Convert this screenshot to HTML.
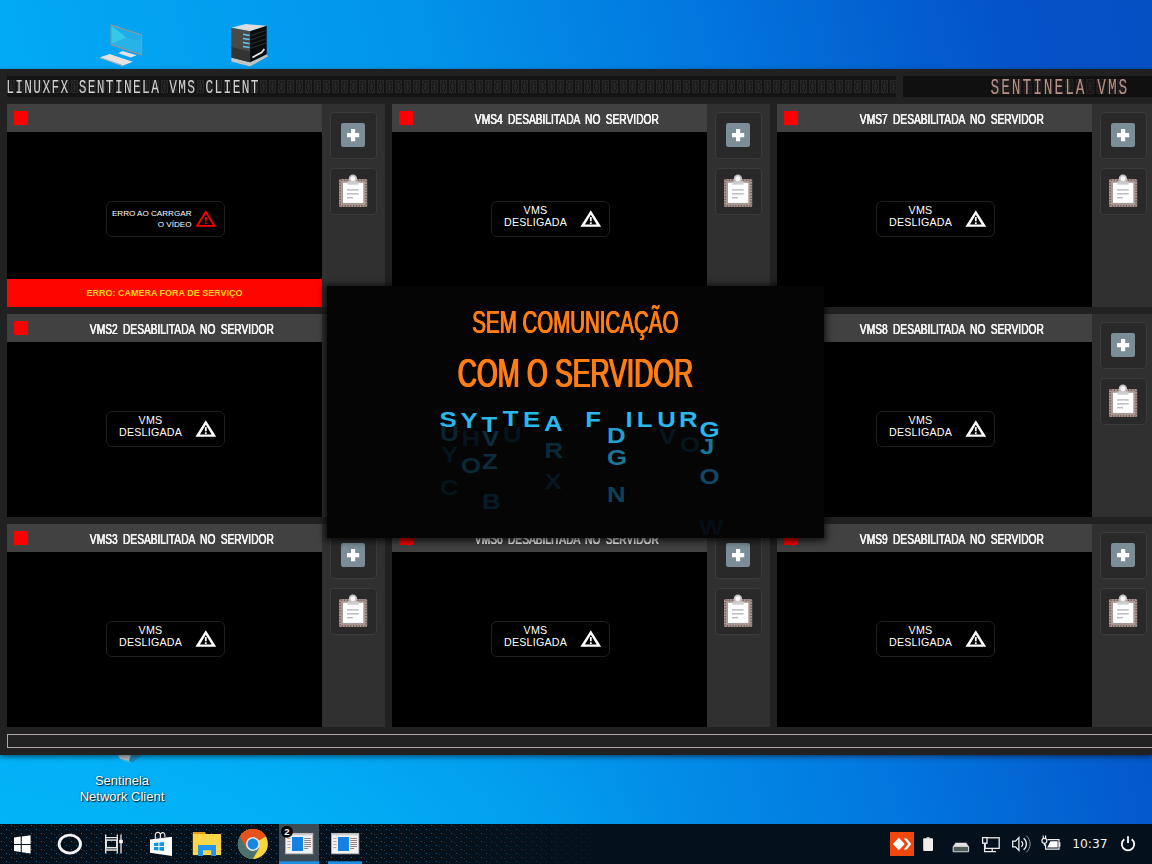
<!DOCTYPE html>
<html lang="pt-BR"><head><meta charset="utf-8"><title>Linuxfx Sentinela VMS Client</title>
<style>
*{box-sizing:border-box;margin:0;padding:0}
html,body{width:1152px;height:864px;overflow:hidden}
body{position:relative;font-family:"Liberation Sans",sans-serif;background:#0487e2;color:#fff}
.a{position:absolute}
#desk{left:0;top:0;width:1152px;height:864px;background:radial-gradient(ellipse 520px 170px at 140px 850px,rgba(2,182,249,.85),rgba(2,182,249,0)),linear-gradient(76deg,#02b0f7 0%,#02a9f5 16%,#0296eb 44%,#0276de 67%,#0364d2 78%,#0453c8 89%,#0550c3 100%)}
#win{left:0;top:69px;width:1152px;height:686px;background:#212121;box-shadow:0 2px 5px rgba(0,0,0,.5)}
#wc{left:0;top:0;width:1152px;height:686px;overflow:hidden}
.led{font-family:"Liberation Mono",monospace;white-space:pre;transform-origin:0 0}
.cam{width:378px;height:203px;background:#303030}
.hd{left:0;top:0;width:315px;height:28px;background:#414141}
.vid{left:0;top:28px;width:315px;height:175px;background:#000}
.sq{left:7px;top:7px;width:14px;height:14px;background:#fe0000}
.ttl{left:35px;top:1px;width:280px;height:28px;text-align:center;font-size:14.5px;line-height:28px;white-space:nowrap;color:#f2f2f2}
.ttl span{display:inline-block;transform:scaleX(.703);word-spacing:3.6px;text-shadow:.35px 0 0 #f2f2f2,-.35px 0 0 #f2f2f2;transform-origin:50% 50%}
.btn{left:323px;width:47px;height:47px;border:1px solid #3b3b3b;border-radius:4px;background:#292929}
.lab{left:99px;top:97px;width:119px;height:36px;border:1px solid #1f1f1f;border-radius:6px;background:#000}
.lab .t{left:0;top:2px;width:87px;text-align:center;font-size:10.7px;letter-spacing:.2px;line-height:12px;color:#fff;white-space:nowrap}
</style></head><body>
<div id="desk" class="a"></div>
<svg class="a" style="left:96px;top:20px" width="52" height="50" viewBox="0 0 52 50">
<polygon points="22.2,33.3 26.5,31 40.7,35.2 34.9,37.5" fill="#e6e2e0"/>
<polygon points="15.1,5.1 45.6,14.8 45.6,34.9 15.1,24.5" fill="#22abe8" stroke="#9c948f" stroke-width="1.1"/>
<polygon points="15.7,6 15.7,24 30.5,17.6" fill="#33c9e8"/>
<polygon points="15.7,24 30.5,17.6 45,21 45,34 " fill="#2bb8ea" opacity=".6"/>
<polygon points="4.1,37.2 13.5,33.9 36.8,41.7 27.1,45.6" fill="#e6e2e0"/>
<polygon points="4.1,37.2 27.1,45.6 27.1,46.6 4.1,38.2" fill="#b9b0ab"/>
</svg>
<svg class="a" style="left:228px;top:21px" width="44" height="48" viewBox="0 0 44 48">
<polygon points="3.3,36.5 22.1,41.3 38.7,33.2 40,35.2 22,45.5 3.3,40.4" fill="#c4c4c4"/>
<polygon points="3.3,6.7 17.9,3.1 38.7,4.7 22.1,10.2" fill="#dcdcdc"/>
<polygon points="3.3,6.7 22.1,10.2 22.1,41.3 3.3,36.5" fill="#484a4a"/>
<polygon points="3.3,26 22.1,30.5 22.1,41.3 3.3,36.5" fill="#333"/>
<polygon points="22.1,10.2 38.7,4.7 38.7,33.2 22.1,41.3" fill="#0b0b0b"/>
<g stroke="#62c6f2" stroke-width="1.5"><line x1="15" y1="13.2" x2="21.6" y2="14.4"/><line x1="15" y1="17.4" x2="21.6" y2="18.6"/><line x1="15" y1="21.6" x2="21.6" y2="22.8"/><line x1="15" y1="25.4" x2="21.6" y2="26.6"/></g>
<g stroke="#2c2c2c" stroke-width="1.1"><line x1="23" y1="14.6" x2="38" y2="9.4"/><line x1="23" y1="18.8" x2="38" y2="13.6"/><line x1="23" y1="23" x2="38" y2="17.8"/><line x1="23" y1="27.2" x2="38" y2="22"/></g>
<path d="M24.4 36.4 L33.5 31.6 L36.4 28" fill="none" stroke="#eaeaea" stroke-width="1.7"/>
</svg>
<svg class="a" style="left:112px;top:755px" width="36" height="10" viewBox="0 0 36 10">
<polygon points="6,0 19,0 17,6 8,4" fill="#b9c4c9"/><polygon points="19,0 30,0 20,8 17,6" fill="#1f88b8"/><polygon points="8,4 17,6 20,8 12,6" fill="#3cc3e6"/>
</svg>
<div class="a" style="left:62px;top:773px;width:120px;text-align:center;font-size:13px;line-height:15.6px;color:#fff;text-shadow:1px 1px 1px rgba(0,0,0,.85),0 0 2px rgba(0,0,0,.5)">Sentinela<br>Network Client</div>
<div id="win" class="a"><div id="wc" class="a">
<svg class="a" style="left:7px;top:7px" width="889" height="21" viewBox="0 0 889 21">
<defs><pattern id="seg" width="9" height="21" patternUnits="userSpaceOnUse">
<g stroke="#272727" stroke-width="1" fill="none"><path d="M1.5 4.5h6M1.5 10.5h6M1.5 16.5h6M1.5 4.5v12M7.5 4.5v12M4.5 4.5v12M1.5 4.5l6 12M7.5 4.5l-6 12"/></g></pattern></defs>
<rect width="889" height="21" fill="#141414"/><rect x="0" width="889" height="21" fill="url(#seg)"/></svg>
<div class="a led" id="led1" style="left:6.2px;top:10px;font-size:12.8px;letter-spacing:1.38px;line-height:12px;height:12px;color:#d2d2d2;transform:scale(1,1.58)">LINUXFX SENTINELA VMS CLIENT</div>
<svg class="a" style="left:903px;top:7px" width="249" height="21" viewBox="0 0 249 21"><defs><pattern id="seg2" x="88.5" width="10.4" height="21" patternUnits="userSpaceOnUse"><g stroke="#262222" stroke-width="1" fill="none"><path d="M1.5 3.5h7M1.5 10.5h7M1.5 17.5h7M1.5 3.5v14M8.5 3.5v14M5 3.5v14M1.5 3.5l7 14M8.5 3.5l-7 14"/></g></pattern></defs><rect width="249" height="21" fill="#101010"/><rect x="88.5" width="135.2" height="21" fill="url(#seg2)"/></svg>
<div class="a led" id="led2" style="left:990.5px;top:8px;font-size:14.5px;letter-spacing:1.97px;line-height:14px;height:14px;color:#b89088;transform:scale(1,1.567)">SENTINELA VMS</div>
<div class="a cam" style="left:7px;top:35px"><div class="a hd"></div><div class="a vid"></div><div class="a sq"></div><div class="a lab"><div class="a t" style="left:0px;top:6px;width:84.5px;text-align:right;font-size:8.1px;letter-spacing:0;line-height:11px">ERRO AO CARRGAR<br>O VÍDEO</div><svg class="a" style="left:88px;top:8px" width="23" height="19" viewBox="0 0 23 19"><path d="M10.8 0.2L21.2 16.8H0.4z M10.8 3.7L3.7 15H17.9z" fill="#f00" fill-rule="evenodd"/><rect x="9.9" y="7" width="1.8" height="4.3" fill="#f00"/><rect x="9.9" y="12.3" width="1.8" height="1.7" fill="#f00"/></svg></div><div class="a" style="left:0;top:175px;width:315px;height:28px;background:#fe0500;text-align:center;font-size:9px;font-weight:bold;line-height:29px;color:#ffd21c">ERRO: CAMERA FORA DE SERVIÇO</div><div class="a btn" style="top:8px"><svg class="a" style="left:10px;top:10px" width="25" height="25" viewBox="0 0 25 25"><rect x="0" y="0" width="24" height="24" rx="2.2" fill="#7b8d96"/><path d="M10 6h4.2v4h4v4.2h-4v4h-4.2v-4h-4v-4.2h4z" fill="#fff"/></svg></div><div class="a btn" style="top:64px"><svg class="a" style="left:7px;top:5px" width="31" height="35" viewBox="0 0 31 35"><rect x="1" y="5" width="28.2" height="28.1" rx="1.6" fill="#a69895"/><rect x="2.1" y="6.1" width="26" height="25.9" rx="1" fill="none" stroke="#6b4a40" stroke-width="1.3" stroke-dasharray="1.2 1.6"/><rect x="5" y="8.8" width="20.3" height="20.1" fill="#fff"/><circle cx="14.9" cy="4.7" r="3.3" fill="#fafafa" stroke="#c4c4c4" stroke-width="1.7"/><rect x="9.4" y="7.5" width="11.3" height="3.2" fill="#cdcdcd"/><g stroke="#bcbcbc" stroke-width="1.5"><line x1="9" y1="15.9" x2="20.7" y2="15.9"/><line x1="9" y1="19.8" x2="20.7" y2="19.8"/><line x1="9" y1="23.7" x2="15" y2="23.7"/></g></svg></div></div>
<div class="a cam" style="left:7px;top:245px"><div class="a hd"></div><div class="a vid"></div><div class="a sq"></div><div class="a ttl"><span>VMS2 DESABILITADA NO SERVIDOR</span></div><div class="a lab"><div class="a t">VMS<br>DESLIGADA</div><svg class="a" style="left:88px;top:8px" width="23" height="19" viewBox="0 0 23 19"><path d="M10.8 0.2L21.2 16.8H0.4z M10.8 4.8L4.9 14.4H16.7z" fill="#fff" fill-rule="evenodd"/><rect x="9.9" y="7" width="1.8" height="4.3" fill="#fff"/><rect x="9.9" y="12.3" width="1.8" height="1.7" fill="#fff"/></svg></div><div class="a btn" style="top:8px"><svg class="a" style="left:10px;top:10px" width="25" height="25" viewBox="0 0 25 25"><rect x="0" y="0" width="24" height="24" rx="2.2" fill="#7b8d96"/><path d="M10 6h4.2v4h4v4.2h-4v4h-4.2v-4h-4v-4.2h4z" fill="#fff"/></svg></div><div class="a btn" style="top:64px"><svg class="a" style="left:7px;top:5px" width="31" height="35" viewBox="0 0 31 35"><rect x="1" y="5" width="28.2" height="28.1" rx="1.6" fill="#a69895"/><rect x="2.1" y="6.1" width="26" height="25.9" rx="1" fill="none" stroke="#6b4a40" stroke-width="1.3" stroke-dasharray="1.2 1.6"/><rect x="5" y="8.8" width="20.3" height="20.1" fill="#fff"/><circle cx="14.9" cy="4.7" r="3.3" fill="#fafafa" stroke="#c4c4c4" stroke-width="1.7"/><rect x="9.4" y="7.5" width="11.3" height="3.2" fill="#cdcdcd"/><g stroke="#bcbcbc" stroke-width="1.5"><line x1="9" y1="15.9" x2="20.7" y2="15.9"/><line x1="9" y1="19.8" x2="20.7" y2="19.8"/><line x1="9" y1="23.7" x2="15" y2="23.7"/></g></svg></div></div>
<div class="a cam" style="left:7px;top:455px"><div class="a hd"></div><div class="a vid"></div><div class="a sq"></div><div class="a ttl"><span>VMS3 DESABILITADA NO SERVIDOR</span></div><div class="a lab"><div class="a t">VMS<br>DESLIGADA</div><svg class="a" style="left:88px;top:8px" width="23" height="19" viewBox="0 0 23 19"><path d="M10.8 0.2L21.2 16.8H0.4z M10.8 4.8L4.9 14.4H16.7z" fill="#fff" fill-rule="evenodd"/><rect x="9.9" y="7" width="1.8" height="4.3" fill="#fff"/><rect x="9.9" y="12.3" width="1.8" height="1.7" fill="#fff"/></svg></div><div class="a btn" style="top:8px"><svg class="a" style="left:10px;top:10px" width="25" height="25" viewBox="0 0 25 25"><rect x="0" y="0" width="24" height="24" rx="2.2" fill="#7b8d96"/><path d="M10 6h4.2v4h4v4.2h-4v4h-4.2v-4h-4v-4.2h4z" fill="#fff"/></svg></div><div class="a btn" style="top:64px"><svg class="a" style="left:7px;top:5px" width="31" height="35" viewBox="0 0 31 35"><rect x="1" y="5" width="28.2" height="28.1" rx="1.6" fill="#a69895"/><rect x="2.1" y="6.1" width="26" height="25.9" rx="1" fill="none" stroke="#6b4a40" stroke-width="1.3" stroke-dasharray="1.2 1.6"/><rect x="5" y="8.8" width="20.3" height="20.1" fill="#fff"/><circle cx="14.9" cy="4.7" r="3.3" fill="#fafafa" stroke="#c4c4c4" stroke-width="1.7"/><rect x="9.4" y="7.5" width="11.3" height="3.2" fill="#cdcdcd"/><g stroke="#bcbcbc" stroke-width="1.5"><line x1="9" y1="15.9" x2="20.7" y2="15.9"/><line x1="9" y1="19.8" x2="20.7" y2="19.8"/><line x1="9" y1="23.7" x2="15" y2="23.7"/></g></svg></div></div>
<div class="a cam" style="left:392px;top:35px"><div class="a hd"></div><div class="a vid"></div><div class="a sq"></div><div class="a ttl"><span>VMS4 DESABILITADA NO SERVIDOR</span></div><div class="a lab"><div class="a t">VMS<br>DESLIGADA</div><svg class="a" style="left:88px;top:8px" width="23" height="19" viewBox="0 0 23 19"><path d="M10.8 0.2L21.2 16.8H0.4z M10.8 4.8L4.9 14.4H16.7z" fill="#fff" fill-rule="evenodd"/><rect x="9.9" y="7" width="1.8" height="4.3" fill="#fff"/><rect x="9.9" y="12.3" width="1.8" height="1.7" fill="#fff"/></svg></div><div class="a btn" style="top:8px"><svg class="a" style="left:10px;top:10px" width="25" height="25" viewBox="0 0 25 25"><rect x="0" y="0" width="24" height="24" rx="2.2" fill="#7b8d96"/><path d="M10 6h4.2v4h4v4.2h-4v4h-4.2v-4h-4v-4.2h4z" fill="#fff"/></svg></div><div class="a btn" style="top:64px"><svg class="a" style="left:7px;top:5px" width="31" height="35" viewBox="0 0 31 35"><rect x="1" y="5" width="28.2" height="28.1" rx="1.6" fill="#a69895"/><rect x="2.1" y="6.1" width="26" height="25.9" rx="1" fill="none" stroke="#6b4a40" stroke-width="1.3" stroke-dasharray="1.2 1.6"/><rect x="5" y="8.8" width="20.3" height="20.1" fill="#fff"/><circle cx="14.9" cy="4.7" r="3.3" fill="#fafafa" stroke="#c4c4c4" stroke-width="1.7"/><rect x="9.4" y="7.5" width="11.3" height="3.2" fill="#cdcdcd"/><g stroke="#bcbcbc" stroke-width="1.5"><line x1="9" y1="15.9" x2="20.7" y2="15.9"/><line x1="9" y1="19.8" x2="20.7" y2="19.8"/><line x1="9" y1="23.7" x2="15" y2="23.7"/></g></svg></div></div>
<div class="a cam" style="left:392px;top:245px"><div class="a hd"></div><div class="a vid"></div><div class="a sq"></div><div class="a ttl"><span>VMS5 DESABILITADA NO SERVIDOR</span></div><div class="a lab"><div class="a t">VMS<br>DESLIGADA</div><svg class="a" style="left:88px;top:8px" width="23" height="19" viewBox="0 0 23 19"><path d="M10.8 0.2L21.2 16.8H0.4z M10.8 4.8L4.9 14.4H16.7z" fill="#fff" fill-rule="evenodd"/><rect x="9.9" y="7" width="1.8" height="4.3" fill="#fff"/><rect x="9.9" y="12.3" width="1.8" height="1.7" fill="#fff"/></svg></div><div class="a btn" style="top:8px"><svg class="a" style="left:10px;top:10px" width="25" height="25" viewBox="0 0 25 25"><rect x="0" y="0" width="24" height="24" rx="2.2" fill="#7b8d96"/><path d="M10 6h4.2v4h4v4.2h-4v4h-4.2v-4h-4v-4.2h4z" fill="#fff"/></svg></div><div class="a btn" style="top:64px"><svg class="a" style="left:7px;top:5px" width="31" height="35" viewBox="0 0 31 35"><rect x="1" y="5" width="28.2" height="28.1" rx="1.6" fill="#a69895"/><rect x="2.1" y="6.1" width="26" height="25.9" rx="1" fill="none" stroke="#6b4a40" stroke-width="1.3" stroke-dasharray="1.2 1.6"/><rect x="5" y="8.8" width="20.3" height="20.1" fill="#fff"/><circle cx="14.9" cy="4.7" r="3.3" fill="#fafafa" stroke="#c4c4c4" stroke-width="1.7"/><rect x="9.4" y="7.5" width="11.3" height="3.2" fill="#cdcdcd"/><g stroke="#bcbcbc" stroke-width="1.5"><line x1="9" y1="15.9" x2="20.7" y2="15.9"/><line x1="9" y1="19.8" x2="20.7" y2="19.8"/><line x1="9" y1="23.7" x2="15" y2="23.7"/></g></svg></div></div>
<div class="a cam" style="left:392px;top:455px"><div class="a hd"></div><div class="a vid"></div><div class="a sq"></div><div class="a ttl"><span>VMS6 DESABILITADA NO SERVIDOR</span></div><div class="a lab"><div class="a t">VMS<br>DESLIGADA</div><svg class="a" style="left:88px;top:8px" width="23" height="19" viewBox="0 0 23 19"><path d="M10.8 0.2L21.2 16.8H0.4z M10.8 4.8L4.9 14.4H16.7z" fill="#fff" fill-rule="evenodd"/><rect x="9.9" y="7" width="1.8" height="4.3" fill="#fff"/><rect x="9.9" y="12.3" width="1.8" height="1.7" fill="#fff"/></svg></div><div class="a btn" style="top:8px"><svg class="a" style="left:10px;top:10px" width="25" height="25" viewBox="0 0 25 25"><rect x="0" y="0" width="24" height="24" rx="2.2" fill="#7b8d96"/><path d="M10 6h4.2v4h4v4.2h-4v4h-4.2v-4h-4v-4.2h4z" fill="#fff"/></svg></div><div class="a btn" style="top:64px"><svg class="a" style="left:7px;top:5px" width="31" height="35" viewBox="0 0 31 35"><rect x="1" y="5" width="28.2" height="28.1" rx="1.6" fill="#a69895"/><rect x="2.1" y="6.1" width="26" height="25.9" rx="1" fill="none" stroke="#6b4a40" stroke-width="1.3" stroke-dasharray="1.2 1.6"/><rect x="5" y="8.8" width="20.3" height="20.1" fill="#fff"/><circle cx="14.9" cy="4.7" r="3.3" fill="#fafafa" stroke="#c4c4c4" stroke-width="1.7"/><rect x="9.4" y="7.5" width="11.3" height="3.2" fill="#cdcdcd"/><g stroke="#bcbcbc" stroke-width="1.5"><line x1="9" y1="15.9" x2="20.7" y2="15.9"/><line x1="9" y1="19.8" x2="20.7" y2="19.8"/><line x1="9" y1="23.7" x2="15" y2="23.7"/></g></svg></div></div>
<div class="a cam" style="left:777px;top:35px"><div class="a hd"></div><div class="a vid"></div><div class="a sq"></div><div class="a ttl"><span>VMS7 DESABILITADA NO SERVIDOR</span></div><div class="a lab"><div class="a t">VMS<br>DESLIGADA</div><svg class="a" style="left:88px;top:8px" width="23" height="19" viewBox="0 0 23 19"><path d="M10.8 0.2L21.2 16.8H0.4z M10.8 4.8L4.9 14.4H16.7z" fill="#fff" fill-rule="evenodd"/><rect x="9.9" y="7" width="1.8" height="4.3" fill="#fff"/><rect x="9.9" y="12.3" width="1.8" height="1.7" fill="#fff"/></svg></div><div class="a btn" style="top:8px"><svg class="a" style="left:10px;top:10px" width="25" height="25" viewBox="0 0 25 25"><rect x="0" y="0" width="24" height="24" rx="2.2" fill="#7b8d96"/><path d="M10 6h4.2v4h4v4.2h-4v4h-4.2v-4h-4v-4.2h4z" fill="#fff"/></svg></div><div class="a btn" style="top:64px"><svg class="a" style="left:7px;top:5px" width="31" height="35" viewBox="0 0 31 35"><rect x="1" y="5" width="28.2" height="28.1" rx="1.6" fill="#a69895"/><rect x="2.1" y="6.1" width="26" height="25.9" rx="1" fill="none" stroke="#6b4a40" stroke-width="1.3" stroke-dasharray="1.2 1.6"/><rect x="5" y="8.8" width="20.3" height="20.1" fill="#fff"/><circle cx="14.9" cy="4.7" r="3.3" fill="#fafafa" stroke="#c4c4c4" stroke-width="1.7"/><rect x="9.4" y="7.5" width="11.3" height="3.2" fill="#cdcdcd"/><g stroke="#bcbcbc" stroke-width="1.5"><line x1="9" y1="15.9" x2="20.7" y2="15.9"/><line x1="9" y1="19.8" x2="20.7" y2="19.8"/><line x1="9" y1="23.7" x2="15" y2="23.7"/></g></svg></div></div>
<div class="a cam" style="left:777px;top:245px"><div class="a hd"></div><div class="a vid"></div><div class="a sq"></div><div class="a ttl"><span>VMS8 DESABILITADA NO SERVIDOR</span></div><div class="a lab"><div class="a t">VMS<br>DESLIGADA</div><svg class="a" style="left:88px;top:8px" width="23" height="19" viewBox="0 0 23 19"><path d="M10.8 0.2L21.2 16.8H0.4z M10.8 4.8L4.9 14.4H16.7z" fill="#fff" fill-rule="evenodd"/><rect x="9.9" y="7" width="1.8" height="4.3" fill="#fff"/><rect x="9.9" y="12.3" width="1.8" height="1.7" fill="#fff"/></svg></div><div class="a btn" style="top:8px"><svg class="a" style="left:10px;top:10px" width="25" height="25" viewBox="0 0 25 25"><rect x="0" y="0" width="24" height="24" rx="2.2" fill="#7b8d96"/><path d="M10 6h4.2v4h4v4.2h-4v4h-4.2v-4h-4v-4.2h4z" fill="#fff"/></svg></div><div class="a btn" style="top:64px"><svg class="a" style="left:7px;top:5px" width="31" height="35" viewBox="0 0 31 35"><rect x="1" y="5" width="28.2" height="28.1" rx="1.6" fill="#a69895"/><rect x="2.1" y="6.1" width="26" height="25.9" rx="1" fill="none" stroke="#6b4a40" stroke-width="1.3" stroke-dasharray="1.2 1.6"/><rect x="5" y="8.8" width="20.3" height="20.1" fill="#fff"/><circle cx="14.9" cy="4.7" r="3.3" fill="#fafafa" stroke="#c4c4c4" stroke-width="1.7"/><rect x="9.4" y="7.5" width="11.3" height="3.2" fill="#cdcdcd"/><g stroke="#bcbcbc" stroke-width="1.5"><line x1="9" y1="15.9" x2="20.7" y2="15.9"/><line x1="9" y1="19.8" x2="20.7" y2="19.8"/><line x1="9" y1="23.7" x2="15" y2="23.7"/></g></svg></div></div>
<div class="a cam" style="left:777px;top:455px"><div class="a hd"></div><div class="a vid"></div><div class="a sq"></div><div class="a ttl"><span>VMS9 DESABILITADA NO SERVIDOR</span></div><div class="a lab"><div class="a t">VMS<br>DESLIGADA</div><svg class="a" style="left:88px;top:8px" width="23" height="19" viewBox="0 0 23 19"><path d="M10.8 0.2L21.2 16.8H0.4z M10.8 4.8L4.9 14.4H16.7z" fill="#fff" fill-rule="evenodd"/><rect x="9.9" y="7" width="1.8" height="4.3" fill="#fff"/><rect x="9.9" y="12.3" width="1.8" height="1.7" fill="#fff"/></svg></div><div class="a btn" style="top:8px"><svg class="a" style="left:10px;top:10px" width="25" height="25" viewBox="0 0 25 25"><rect x="0" y="0" width="24" height="24" rx="2.2" fill="#7b8d96"/><path d="M10 6h4.2v4h4v4.2h-4v4h-4.2v-4h-4v-4.2h4z" fill="#fff"/></svg></div><div class="a btn" style="top:64px"><svg class="a" style="left:7px;top:5px" width="31" height="35" viewBox="0 0 31 35"><rect x="1" y="5" width="28.2" height="28.1" rx="1.6" fill="#a69895"/><rect x="2.1" y="6.1" width="26" height="25.9" rx="1" fill="none" stroke="#6b4a40" stroke-width="1.3" stroke-dasharray="1.2 1.6"/><rect x="5" y="8.8" width="20.3" height="20.1" fill="#fff"/><circle cx="14.9" cy="4.7" r="3.3" fill="#fafafa" stroke="#c4c4c4" stroke-width="1.7"/><rect x="9.4" y="7.5" width="11.3" height="3.2" fill="#cdcdcd"/><g stroke="#bcbcbc" stroke-width="1.5"><line x1="9" y1="15.9" x2="20.7" y2="15.9"/><line x1="9" y1="19.8" x2="20.7" y2="19.8"/><line x1="9" y1="23.7" x2="15" y2="23.7"/></g></svg></div></div>
<div class="a" style="left:7px;top:665px;width:1160px;height:14px;border:1px solid #b3a6a6;background:#212121"></div>
</div></div>
<div class="a" id="ov" style="left:327px;top:286px;width:497px;height:252px;background:#050506;box-shadow:0 1px 7px 2px rgba(0,0,0,.75)">
<div class="a" id="o1" style="left:0;top:18px;width:497px;text-align:center;font-size:30.5px;line-height:36px;color:#ff7d12;white-space:nowrap"><span style="display:inline-block;transform:scaleX(.672);text-shadow:.75px 0 0 #ff7d12,-.75px 0 0 #ff7d12">SEM COMUNICAÇÃO</span></div>
<div class="a" id="o2" style="left:0;top:63px;width:497px;text-align:center;font-size:40.7px;line-height:48px;color:#ff7d12;white-space:nowrap"><span style="display:inline-block;transform:scaleX(.652);text-shadow:1.1px 0 0 #ff7d12,-1.1px 0 0 #ff7d12">COM O SERVIDOR</span></div>
<svg class="a" style="left:0;top:0" width="497" height="252" viewBox="0 0 497 252" font-family="Liberation Sans, sans-serif" font-weight="bold" font-size="21.5" fill="#2ab7ee"><text transform="translate(112.5 140.7) scale(1.2 1)">S</text><text transform="translate(133.6 142.0) scale(1.2 1)">Y</text><text transform="translate(154.6 145.6) scale(1.2 1)">T</text><text transform="translate(175.7 140.2) scale(1.2 1)">T</text><text transform="translate(196.0 140.7) scale(1.2 1)">E</text><text transform="translate(217.0 144.8) scale(1.2 1)">A</text><text transform="translate(258.2 140.7) scale(1.2 1)">F</text><text transform="translate(298.6 140.7) scale(1.2 1)">I</text><text transform="translate(309.7 140.7) scale(1.2 1)">L</text><text transform="translate(330.3 140.7) scale(1.2 1)">U</text><text transform="translate(352.0 140.7) scale(1.2 1)">R</text><text transform="translate(372.4 151.3) scale(1.2 1)">G</text><text transform="translate(280.0 157.4) scale(1.2 1)" fill="#249fd0">D</text><text transform="translate(280.0 178.8) scale(1.2 1)" fill="#1a7599">G</text><text transform="translate(373.0 168.3) scale(1.2 1)" fill="#1a7599">J</text><text transform="translate(372.4 198.2) scale(1.2 1)" fill="#114760">O</text><text transform="translate(280.0 216.0) scale(1.2 1)" fill="#0f4057">N</text><text transform="translate(155.0 183.0) scale(1.2 1)" fill="#0b2d3d">Z</text><text transform="translate(134.0 187.0) scale(1.2 1)" fill="#0a2836">O</text><text transform="translate(217.5 172.0) scale(1.2 1)" fill="#0a2a39">R</text><text transform="translate(155.0 160.0) scale(1.2 1)" fill="#0b2d3d">V</text><text transform="translate(113.0 154.5) scale(1.2 1)" fill="#092431">U</text><text transform="translate(114.0 176.0) scale(1.2 1)" fill="#06141b">Y</text><text transform="translate(217.5 202.5) scale(1.2 1)" fill="#06171f">X</text><text transform="translate(113.0 209.0) scale(1.2 1)" fill="#06141b">C</text><text transform="translate(155.0 222.5) scale(1.2 1)" fill="#071c26">B</text><text transform="translate(372.0 249.0) scale(1.2 1)" fill="#050e13">W</text><text transform="translate(332.0 158.0) scale(1.2 1)" fill="#06171f">V</text><text transform="translate(353.0 166.0) scale(1.2 1)" fill="#06151c">O</text><text transform="translate(134.5 160.0) scale(1.2 1)" fill="#06141b">H</text><text transform="translate(176.0 156.0) scale(1.2 1)" fill="#06141b">U</text></svg>
</div>
<div class="a" id="tb" style="left:0;top:824px;width:1152px;height:40px;background:#04101b"></div>
<svg class="a" style="left:0;top:824px" width="1152" height="40" viewBox="0 0 1152 40">
<defs><pattern id="dz" width="10" height="8" patternUnits="userSpaceOnUse"><rect x="1" y="1" width="1" height="1" fill="#176a9c"/><rect x="6" y="5" width="1" height="1" fill="#176a9c"/><rect x="4" y="2" width="1" height="1" fill="#3a3026"/><rect x="9" y="6" width="1" height="1" fill="#3a3026"/></pattern><linearGradient id="fg" x1="0" x2="640" gradientUnits="userSpaceOnUse"><stop offset="0" stop-color="#fff"/><stop offset=".6" stop-color="#fff"/><stop offset="1" stop-color="#000"/></linearGradient><mask id="fm" maskUnits="userSpaceOnUse" x="0" y="0" width="640" height="40"><rect width="640" height="40" fill="url(#fg)"/></mask></defs>
<rect x="0" y="1" width="640" height="39" fill="url(#dz)" mask="url(#fm)"/>
<!-- start -->
<polygon points="14,13.6 20.7,12.6 20.7,19.9 14,19.9" fill="#fff"/><polygon points="21.8,12.4 30.6,11.2 30.6,19.9 21.8,19.9" fill="#fff"/><polygon points="14,20.9 20.7,20.9 20.7,28 14,27" fill="#fff"/><polygon points="21.8,20.9 30.6,20.9 30.6,29.6 21.8,28.2" fill="#fff"/>
<!-- cortana -->
<ellipse cx="69.8" cy="20.1" rx="10.7" ry="9" fill="none" stroke="#f4f4f4" stroke-width="2.9"/>
<!-- task view -->
<g fill="none" stroke="#e6e6e6" stroke-width="1.3"><path d="M105.7 10.5v19M117.3 10.5v19M105.7 13.6h11.6M105.7 26h11.6"/><rect x="106.2" y="16.1" width="10.6" height="7.6" stroke-width="1.5"/><path d="M121 10.5v19"/></g><rect x="119.2" y="15.8" width="3.6" height="3.4" fill="#fff"/>
<!-- store -->
<path d="M155.3 15v-3.2a2.6 3.4 0 0 1 5.2 0v2.6M160.3 14v-2.4a2.3 3 0 0 1 4.6 0v2" fill="none" stroke="#e8e8e8" stroke-width="1.1"/>
<polygon points="150,15.6 172,12.8 172,32 150,28.8" fill="#fff"/>
<g fill="#0a94f0"><polygon points="154,19 158.4,18.5 158.4,22 154,22"/><polygon points="159.4,18.4 164,17.9 164,22 159.4,22"/><polygon points="154,23 158.4,23 158.4,26.4 154,25.9"/><polygon points="159.4,23 164,23 164,27.1 159.4,26.5"/></g>
<!-- folder -->
<path d="M192.8 8h12.2l1.2 2.2h-13.4z" fill="#e39a1d"/><rect x="192.8" y="10" width="28.3" height="21.1" fill="#fdd647"/>
<path d="M198 21h18v11h-4.8v-5.8h-8.2v5.8h-5z" fill="#2295ee"/>
<!-- chrome -->
<circle cx="252.9" cy="20" r="15" fill="#f9d53c"/>
<path d="M252.9 20 L239.9 12.5 A15 15 0 0 1 265.9 12.5 Z" fill="#e6521c"/>
<path d="M239.9 12.5 A15 15 0 0 0 252.9 35 L259.4 23.75 L252.9 20 Z" fill="#4d716f"/>
<path d="M239.9 12.5 L246.4 23.75 L252.9 35 A15 15 0 0 1 239.9 12.5Z" fill="#4d716f"/>
<path d="M252.9 12.5 H265.9 A15 15 0 0 0 239.9 12.5 L246.4 23.75 Z" fill="#e6521c"/>
<circle cx="252.9" cy="20" r="6.9" fill="#e9e9e9"/><circle cx="252.9" cy="20" r="5.4" fill="#1787e4"/>
<!-- active task -->
<rect x="279" y="0" width="40" height="40" fill="#3f4b54"/><rect x="279" y="37.3" width="40" height="2.7" fill="#1c8fe2"/><rect x="328" y="37.3" width="34" height="2.7" fill="#1c8fe2"/>
<g id="wi"><rect x="285.6" y="9.4" width="27.2" height="20.4" fill="#f1f1f1" stroke="#b8b8b8" stroke-width=".9"/><rect x="286" y="9.8" width="26.4" height="1.6" fill="#cfcfcf"/><rect x="292" y="13" width="11" height="14" fill="#1382e2"/><g stroke="#8f7474" stroke-width=".9"><path d="M304.2 14.5h6.8M304.2 16.5h6.8M304.2 18.5h6.8M304.2 20.5h6.8M304.2 22.5h6.8M304.2 24.5h4"/><path d="M287.4 14.5h3M287.4 17.5h3M287.4 20.5h3M287.4 23.5h3" stroke="#b59a9a"/></g></g>
<use href="#wi" x="46"/>
<circle cx="286.9" cy="7.8" r="6" fill="#000"/>
<text x="286.9" y="11.2" text-anchor="middle" font-family="Liberation Sans, sans-serif" font-weight="bold" font-size="9.5" fill="#fff">2</text>
<!-- tray -->
<rect x="890" y="8" width="24" height="24" fill="#f0470f"/>
<polygon points="892.9,20 898.8,13.8 904.7,20 898.8,26.2" fill="#fff"/>
<path d="M903.8 14.4h3l4.4 5.6l-4.4 5.6h-3l4.4-5.6z" fill="#fff"/>
<rect x="923.2" y="14.3" width="9.8" height="12.8" rx="1" fill="#eeeeee"/><rect x="926.6" y="13.2" width="3" height="2" fill="#e0e0e0"/>
<path d="M955.6 18.8h10.6l2.6 3.8h-15.8z" fill="#e4e4e4"/><rect x="953.2" y="22.4" width="15.4" height="5.4" rx=".8" fill="#4f5d59" stroke="#cfcfcf" stroke-width="1.1"/>
<g fill="none" stroke="#ececec" stroke-width="1.3"><rect x="985.2" y="13.8" width="14" height="10.6"/><path d="M992.2 24.4v3.2M988 27.6h8"/><rect x="982.6" y="13.6" width="4.4" height="5.6" fill="#04101b"/><path d="M984.6 19.2v8.4h3.4"/></g>
<g fill="none" stroke="#ececec" stroke-width="1.3"><path d="M1012.7 17.2h2.8l3.4-3.6v12.8l-3.4-3.6h-2.8z"/><path d="M1021.4 17.2a3.6 3.6 0 0 1 0 5.6"/><path d="M1023.6 14.2a7.4 7.4 0 0 1 0 11.6"/><path d="M1026.2 11.6a11 11 0 0 1 0 16.8" stroke="#8f9aa0" stroke-width="1"/></g>
<g fill="none" stroke="#ececec" stroke-width="1.2"><path d="M1047.6 15.6h11.4v9.6h-13.4v-5"/><path d="M1059.6 18.2v4.6" stroke-width="1.6"/><circle cx="1044.4" cy="16.8" r="2.5"/><path d="M1043.2 14.2v-2.6M1045.6 14.2v-2.6M1044.4 19.3v2.4"/></g>
<polygon points="1050.4,17.2 1057.6,17.2 1057.6,23.6 1047.2,23.6" fill="#fff"/>
<text x="1089.9" y="24" text-anchor="middle" font-family="DejaVu Sans, Liberation Sans, sans-serif" font-size="12.3" fill="#f2f2f2">10:37</text>
<g fill="none" stroke="#fff" stroke-width="1.8" stroke-linecap="butt"><path d="M1124.3 15.2a6.2 6.2 0 1 0 7.4 0"/><path d="M1128 12.2v6.8"/></g>
</svg>
</body></html>
